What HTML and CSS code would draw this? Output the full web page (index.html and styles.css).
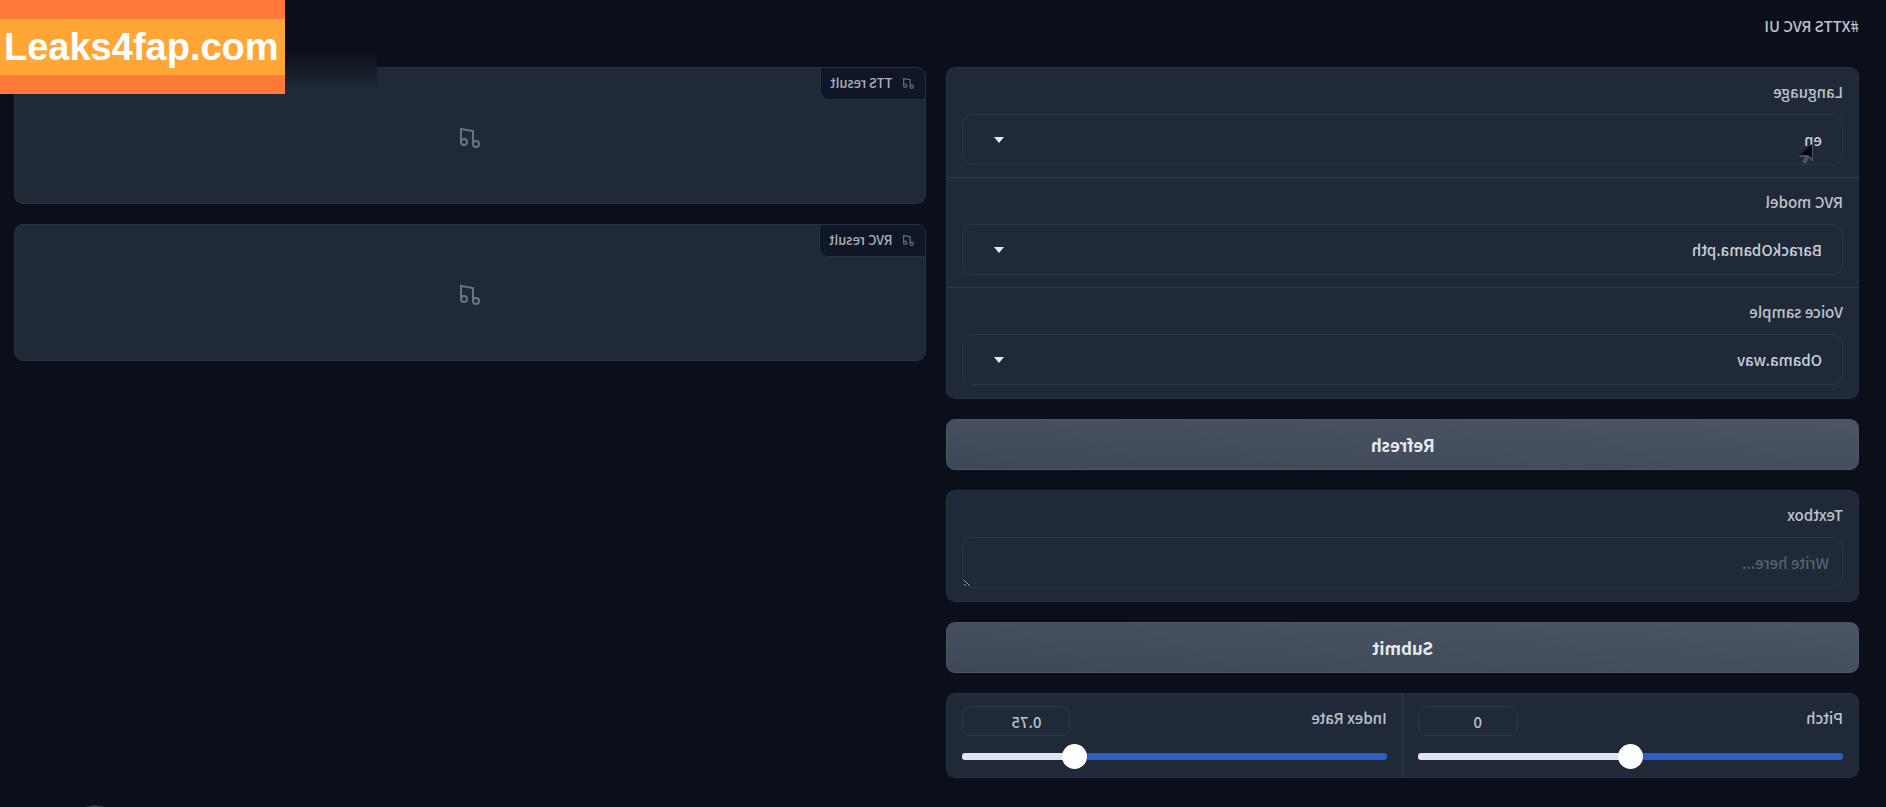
FILE: index.html
```html
<!DOCTYPE html>
<html lang="en">
<head>
<meta charset="utf-8">
<title>XTTS RVC UI</title>
<link rel="stylesheet" href="styles.css">
</head>
<body>
<svg class="defs" aria-hidden="true">
  <symbol id="music" viewBox="0 0 24 24">
    <path d="M9 18V5l12-2v13"/><circle cx="6" cy="18" r="3"/><circle cx="18" cy="16" r="3"/>
  </symbol>
</svg>
<div class="app">
  <p class="title">#XTTS RVC UI</p>
  <main class="columns">
    <section class="column">
      <div class="panel form">
        <div class="field">
          <label class="label" for="language">Language</label>
          <div class="dropdown">
            <select class="control" id="language"><option>en</option></select>
            <svg class="arrow" viewBox="0 0 10 6" aria-hidden="true"><path d="M0 0h10L5 6z"/></svg>
          </div>
        </div>
        <div class="field">
          <label class="label" for="model">RVC model</label>
          <div class="dropdown">
            <select class="control" id="model"><option>BarackObama.pth</option></select>
            <svg class="arrow" viewBox="0 0 10 6" aria-hidden="true"><path d="M0 0h10L5 6z"/></svg>
          </div>
        </div>
        <div class="field">
          <label class="label" for="voice">Voice sample</label>
          <div class="dropdown">
            <select class="control" id="voice"><option>Obama.wav</option></select>
            <svg class="arrow" viewBox="0 0 10 6" aria-hidden="true"><path d="M0 0h10L5 6z"/></svg>
          </div>
        </div>
      </div>
      <button class="button" type="button">Refresh</button>
      <div class="panel form">
        <div class="field">
          <label class="label" for="text">Textbox</label>
          <textarea class="control textarea" id="text" rows="1" placeholder="Write here..."></textarea>
        </div>
      </div>
      <button class="button" type="button">Submit</button>
      <div class="panel sliders">
        <div class="slider">
          <div class="slider-head">
            <label class="slider-label" for="pitch">Pitch</label>
            <input class="number" type="number" value="0" aria-label="Pitch value">
          </div>
          <input class="range range-half" id="pitch" type="range" min="-12" max="12" value="0">
        </div>
        <div class="slider">
          <div class="slider-head">
            <label class="slider-label" for="rate">Index Rate</label>
            <input class="number number-wide" type="number" value="0.75" step="0.01" aria-label="Index Rate value">
          </div>
          <input class="range range-most" id="rate" type="range" min="0" max="1" step="0.01" value="0.75">
        </div>
      </div>
    </section>
    <section class="column">
      <div class="panel audio">
        <div class="tag"><svg class="tag-icon" aria-hidden="true"><use href="#music"/></svg>TTS result</div>
        <svg class="audio-icon" aria-hidden="true"><use href="#music"/></svg>
      </div>
      <div class="panel audio">
        <div class="tag"><svg class="tag-icon" aria-hidden="true"><use href="#music"/></svg>RVC result</div>
        <svg class="audio-icon" aria-hidden="true"><use href="#music"/></svg>
      </div>
    </section>
  </main>
  <svg class="cursor" viewBox="0 0 16 22" aria-hidden="true">
    <path class="cursor-edge" d="M1 1v18l4-4 3 6 4-2-3-5h6z"/>
    <path class="cursor-head" d="M2 1v14l4-3h8z"/>
  </svg>
</div>
<div class="smear"></div>
<div class="watermark"><span class="watermark-text">Leaks4fap.com</span></div>
<div class="bump"></div>
</body>
</html>
```

FILE: styles.css
```css
* { box-sizing: border-box; }

body {
  margin: 0;
  min-height: 100vh;
  position: relative;
  overflow: hidden;
  background: #0b0f19;
  color: #bcc1ca;
  color-scheme: dark;
  font: 500 15px/24px "Noto Sans CJK SC", "Noto Sans", sans-serif;
}

.defs { position: absolute; width: 0; height: 0; }

/* The whole interface is shown mirrored, as by a front camera. */
.app {
  min-height: 100vh;
  padding: 14px 14px 28px 27px;
  transform: scaleX(-1);
}

.title { margin: 0 0 29px; }

.columns {
  display: grid;
  grid-template-columns: 1fr 1fr;
  gap: 20px;
  align-items: start;
}

.column { display: flex; flex-direction: column; gap: 20px; min-width: 0; }

.panel {
  border: 1px solid #27313f;
  border-radius: 9px;
  background: #1f2937;
  overflow: hidden;
}

.field { padding: 12px 15px; }
.field + .field { border-top: 1px solid #2f3a49; }
.field:last-child { padding-bottom: 13px; }

.label { display: block; margin-bottom: 10px; }

.dropdown { display: grid; align-items: center; }
.dropdown > * { grid-area: 1 / 1; }

.control {
  display: block;
  width: 100%;
  height: 51px;
  padding: 0 20px;
  border: 1px solid #2a3544;
  border-radius: 10px;
  background: #1f2937;
  color: #c8cdd6;
  font: inherit;
  appearance: none;
}

.arrow {
  justify-self: end;
  width: 10px;
  height: 6px;
  margin-right: 32px;
  fill: #e8ebf2;
  pointer-events: none;
}

.textarea { padding: 13px; resize: vertical; overflow: hidden; }
.textarea::placeholder { color: #576070; }

.button {
  height: 51px;
  border: 1px solid #4b5563;
  border-radius: 9px;
  background: linear-gradient(to bottom right, #4b5563, #3d4757);
  color: #e6e9ee;
  font: bold 17px/24px "Noto Sans CJK SC", "Noto Sans", sans-serif;
}

.sliders { display: grid; grid-template-columns: 1fr 1fr; }
.slider { padding: 12px 15px 8px; min-width: 0; }
.slider + .slider { border-left: 1px solid #2f3a49; }

.slider-head {
  display: flex;
  justify-content: space-between;
  margin-bottom: 8px;
}

.number {
  width: 100px;
  height: 30px;
  padding: 0 20px 0 0;
  border: 1px solid #2c3746;
  border-radius: 9px;
  background: #1f2937;
  color: #bcc1ca;
  font: inherit;
  text-align: center;
  appearance: textfield;
}
.number::-webkit-inner-spin-button { display: none; }
.number-wide { width: 108px; }

.range {
  display: block;
  width: 100%;
  height: 25px;
  margin: 0;
  background: none;
  appearance: none;
}
.range::-webkit-slider-runnable-track {
  height: 7px;
  border-radius: 3px;
  background: linear-gradient(to right, #2a5fc4 var(--fill), #e2e3ec var(--fill));
}
.range::-webkit-slider-thumb {
  width: 25px;
  height: 25px;
  margin-top: -9px;
  border-radius: 50%;
  background: #fff;
  appearance: none;
}
.range-half { --fill: 50%; }
.range-most { --fill: 74%; }

.audio {
  display: grid;
  place-items: center;
  height: 137px;
  padding-top: 4px;
  position: relative;
}

.tag {
  position: absolute;
  top: 0;
  left: 0;
  display: flex;
  align-items: center;
  gap: 10px;
  padding: 3px 9px 4px 10px;
  border-right: 1px solid #27313f;
  border-bottom: 1px solid #27313f;
  border-radius: 0 0 9px 0;
  background: #0f1626;
  color: #a9afba;
  font-size: 13px;
}

.tag-icon, .audio-icon { fill: none; stroke: #6b7280; stroke-width: 2; }
.tag-icon { width: 13px; height: 13px; }
.audio-icon { width: 24px; height: 24px; }

.cursor {
  position: absolute;
  top: 143px;
  left: 72px;
  width: 16px;
  height: 22px;
}
.cursor-edge { fill: #4b5361; }
.cursor-head { fill: #05070c; }

.smear {
  position: absolute;
  top: 50px;
  left: 0;
  width: 377px;
  height: 40px;
  background: linear-gradient(#0b0f19, #1f2937);
}

.watermark {
  position: absolute;
  top: 0;
  left: 0;
  padding: 19px 0;
  background: #ff7a38;
}
.watermark-text {
  display: block;
  padding: 0 6px 0 4px;
  background: #ffa637;
  color: #fff;
  font: bold 38px/56px "Liberation Sans", sans-serif;
}

.bump {
  position: absolute;
  bottom: -38px;
  left: 74px;
  width: 42px;
  height: 40px;
  border-radius: 50%;
  background: #2f3239;
}
```
